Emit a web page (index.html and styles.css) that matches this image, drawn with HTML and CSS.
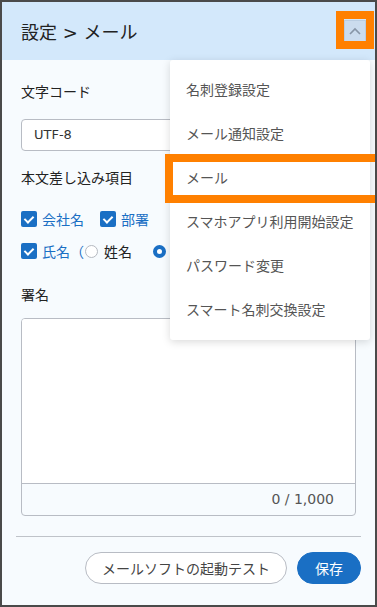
FILE: index.html
```html
<!DOCTYPE html>
<html lang="ja">
<head>
    <meta charset="UTF-8">
    <meta name="viewport" content="width=device-width, initial-scale=1.0">
    <title>設定 &gt; メール</title>
    <link rel="stylesheet" href="styles.css">
</head>
<body>
    <div class="panel">
        <div class="header">
            <h1>設定 &gt; メール</h1>
            <button class="toggle">
                <svg width="12" height="8" viewBox="0 0 12 8"><path d="M1 7 L6 2 L11 7" fill="none" stroke="#8795a6" stroke-width="1.6"/></svg>
            </button>
        </div>

        <div class="content">
            <div class="label">文字コード</div>
            <div class="select">UTF-8</div>

            <div class="label">本文差し込み項目</div>
            <div class="row">
                <span class="check"><span class="box"></span>会社名</span>
                <span class="check"><span class="box"></span>部署</span>
            </div>
            <div class="row">
                <span class="check"><span class="box"></span>氏名（</span>
                <span class="radio"><span class="dot"></span>姓名</span>
                <span class="radio on"><span class="dot"></span></span>
            </div>

            <div class="label sign">署名</div>
            <div class="textarea">
                <div class="text"></div>
                <div class="counter">0 / 1,000</div>
            </div>

            <div class="footer">
                <button class="btn">メールソフトの起動テスト</button>
                <button class="btn primary">保存</button>
            </div>
        </div>

        <ul class="menu">
            <li>名刺登録設定</li>
            <li>メール通知設定</li>
            <li>メール</li>
            <li>スマホアプリ利用開始設定</li>
            <li>パスワード変更</li>
            <li>スマート名刺交換設定</li>
        </ul>

        <div class="mark mark-toggle"></div>
        <div class="mark mark-item"></div>
    </div>
</body>
</html>
```

FILE: styles.css
```css
body {
    margin: 0;
    font-family: "DejaVu Sans", "Noto Sans CJK JP", sans-serif;
}

.panel {
    position: relative;
    width: 377px;
    height: 607px;
    box-sizing: border-box;
    border: 2px solid #4a4a4a;
    background-color: #f7fbfe;
    overflow: hidden;
}

.header {
    display: flex;
    align-items: center;
    justify-content: space-between;
    height: 58px;
    padding: 0 9px 0 19px;
    background-color: #d3e8fb;
}

h1 {
    margin: 0;
    font-size: 18px;
    font-weight: normal;
    color: #222;
}

.toggle {
    display: flex;
    align-items: center;
    justify-content: center;
    width: 22px;
    height: 22px;
    padding: 0;
    border: 1px solid #b9cde2;
    background-color: #cbdcee;
}

.content {
    padding: 22px 19px 0;
}

.label {
    font-size: 14px;
    line-height: 20px;
    color: #222;
}

.select {
    box-sizing: border-box;
    height: 32px;
    margin: 17px 0;
    padding: 0 12px;
    border: 1px solid #b8bcc4;
    border-radius: 4px;
    background-color: #fff;
    font-size: 13px;
    line-height: 30px;
    color: #333;
}

.row {
    display: flex;
    align-items: center;
    height: 24px;
    margin-top: 8px;
    font-size: 14px;
}

.label + .row {
    margin-top: 19px;
}

.check {
    display: flex;
    align-items: center;
    color: #1a6fc4;
    margin-right: 16px;
}

.box {
    position: relative;
    width: 16px;
    height: 16px;
    margin-right: 5px;
    border-radius: 2px;
    background-color: #1a6fc4;
}

.box::after {
    content: "";
    position: absolute;
    left: 5px;
    top: 3px;
    width: 4px;
    height: 7px;
    border: solid #fff;
    border-width: 0 2px 2px 0;
    transform: rotate(45deg);
}

.row .check + .radio {
    margin-left: -16px;
}

.radio {
    display: flex;
    align-items: center;
    color: #222;
    margin-right: 20px;
}

.dot {
    box-sizing: border-box;
    width: 13px;
    height: 13px;
    margin: 0 6px 0 1px;
    border: 1px solid #b5b9c0;
    border-radius: 50%;
    background-color: #fff;
}

.radio.on .dot {
    border: 4px solid #1a6fc4;
}

.sign {
    margin-top: 22px;
}

.textarea {
    margin-top: 13px;
    border: 1px solid #b8bcc4;
    border-radius: 4px;
    overflow: hidden;
}

.text {
    height: 164px;
    background-color: #fff;
    border-bottom: 1px solid #b8bcc4;
}

.counter {
    height: 31px;
    padding-right: 21px;
    font-size: 14px;
    line-height: 31px;
    text-align: right;
    color: #555;
}

.footer {
    display: flex;
    justify-content: flex-end;
    gap: 10px;
    margin: 20px -5px 0;
    padding-top: 15px;
    border-top: 1px solid #bfc3c9;
}

.btn {
    height: 32px;
    padding: 0 16px;
    border: 1px solid #b8bcc4;
    border-radius: 16px;
    background-color: #fff;
    font-family: inherit;
    font-size: 14px;
    color: #444;
}

.btn.primary {
    padding: 0 17px;
    border-color: #1a6fc4;
    background-color: #1a6fc4;
    color: #fff;
}

.menu {
    position: absolute;
    left: 168px;
    top: 58px;
    width: 200px;
    margin: 0;
    padding: 8px 0;
    list-style: none;
    background-color: #fff;
    border-radius: 3px;
    box-shadow: 0 2px 8px rgba(0, 0, 0, 0.15);
}

.menu li {
    height: 44px;
    padding-left: 16px;
    font-size: 14px;
    line-height: 44px;
    color: #555;
}

.mark {
    position: absolute;
    border: 8px solid #ff8000;
}

.mark-toggle {
    left: 334px;
    top: 9px;
    width: 22px;
    height: 22px;
}

.mark-item {
    left: 163px;
    top: 152px;
    width: 205px;
    height: 33px;
}
```
